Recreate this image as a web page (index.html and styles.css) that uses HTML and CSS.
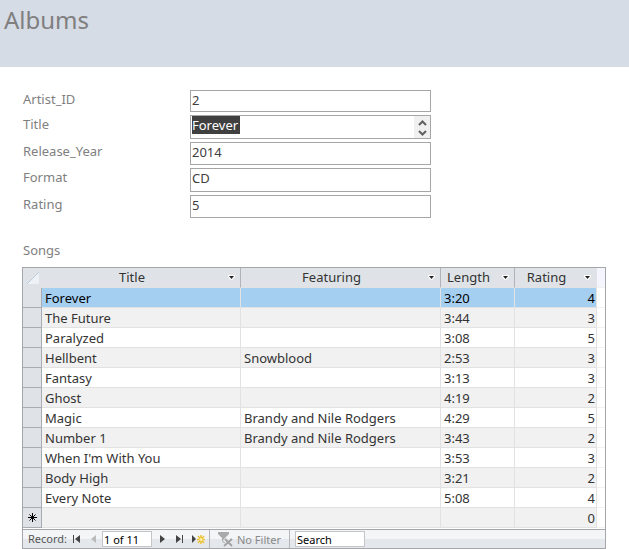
FILE: index.html
```html
<!DOCTYPE html>
<html lang="en">
<head>
<meta charset="utf-8">
<title>Albums</title>
<link rel="stylesheet" href="styles.css">
</head>
<body>
<header class="banner"><h1>Albums</h1></header>
<main class="detail">
  <form class="fields">
    <label for="artist">Artist_ID</label>
    <div class="box short"><input id="artist" value="2"></div>
    <label for="title">Title</label>
    <div class="box tall">
      <input id="title" class="selected" value="Forever">
      <div class="scroller">
        <button type="button" aria-label="Scroll up"><svg width="9" height="6" viewBox="0 0 9 6"><path d="M1 5 4.500 1.500 8 5" fill="none" stroke="#606060" stroke-width="2"/></svg></button>
        <button type="button" aria-label="Scroll down"><svg width="9" height="6" viewBox="0 0 9 6"><path d="M1 1 4.500 4.500 8 1" fill="none" stroke="#606060" stroke-width="2"/></svg></button>
      </div>
    </div>
    <label for="year">Release_Year</label>
    <div class="box"><input id="year" value="2014"></div>
    <label for="format">Format</label>
    <div class="box tall"><input id="format" value="CD"></div>
    <label for="rating">Rating</label>
    <div class="box"><input id="rating" value="5"></div>
  </form>

  <h2 id="songs">Songs</h2>
  <section class="subform" aria-labelledby="songs">
    <table>
      <colgroup><col class="c-sel"><col><col class="c-featuring"><col class="c-length"><col class="c-rating"><col class="c-rest"></colgroup>
      <thead>
        <tr>
          <th class="sel"><svg width="12" height="12" viewBox="0 0 12 12"><path d="M12 0V12H0z" fill="#eef2f7"/><path d="M0 12 12 0" stroke="#b8cde0" fill="none"/></svg></th>
          <th><div class="head"><span>Title</span><button aria-label="Title options"><svg width="7" height="5" viewBox="0 0 7 5"><path d="M0 0H7V2L4 5H3L0 2z" fill="#fff"/><path d="M1 1H6L3.500 4z" fill="#222"/></svg></button></div></th>
          <th><div class="head"><span>Featuring</span><button aria-label="Featuring options"><svg width="7" height="5" viewBox="0 0 7 5"><path d="M0 0H7V2L4 5H3L0 2z" fill="#fff"/><path d="M1 1H6L3.500 4z" fill="#222"/></svg></button></div></th>
          <th><div class="head"><span>Length</span><button aria-label="Length options"><svg width="7" height="5" viewBox="0 0 7 5"><path d="M0 0H7V2L4 5H3L0 2z" fill="#fff"/><path d="M1 1H6L3.500 4z" fill="#222"/></svg></button></div></th>
          <th class="last"><div class="head"><span>Rating</span><button aria-label="Rating options"><svg width="7" height="5" viewBox="0 0 7 5"><path d="M0 0H7V2L4 5H3L0 2z" fill="#fff"/><path d="M1 1H6L3.500 4z" fill="#222"/></svg></button></div></th>
          <td class="rest"></td>
        </tr>
      </thead>
      <tbody>
        <tr class="current"><td class="sel"></td><td>Forever</td><td></td><td>3:20</td><td class="num">4</td><td class="rest"></td></tr>
        <tr><td class="sel"></td><td>The Future</td><td></td><td>3:44</td><td class="num">3</td><td class="rest"></td></tr>
        <tr><td class="sel"></td><td>Paralyzed</td><td></td><td>3:08</td><td class="num">5</td><td class="rest"></td></tr>
        <tr><td class="sel"></td><td>Hellbent</td><td>Snowblood</td><td>2:53</td><td class="num">3</td><td class="rest"></td></tr>
        <tr><td class="sel"></td><td>Fantasy</td><td></td><td>3:13</td><td class="num">3</td><td class="rest"></td></tr>
        <tr><td class="sel"></td><td>Ghost</td><td></td><td>4:19</td><td class="num">2</td><td class="rest"></td></tr>
        <tr><td class="sel"></td><td>Magic</td><td>Brandy and Nile Rodgers</td><td>4:29</td><td class="num">5</td><td class="rest"></td></tr>
        <tr><td class="sel"></td><td>Number 1</td><td>Brandy and Nile Rodgers</td><td>3:43</td><td class="num">2</td><td class="rest"></td></tr>
        <tr><td class="sel"></td><td>When I'm With You</td><td></td><td>3:53</td><td class="num">3</td><td class="rest"></td></tr>
        <tr><td class="sel"></td><td>Body High</td><td></td><td>3:21</td><td class="num">2</td><td class="rest"></td></tr>
        <tr><td class="sel"></td><td>Every Note</td><td></td><td>5:08</td><td class="num">4</td><td class="rest"></td></tr>
        <tr><td class="sel"><svg width="9" height="9" viewBox="0 0 9 9"><path d="M4.500 0V9M0 4.500H9M1.500 1.500 7.500 7.500M7.500 1.500 1.500 7.500" stroke="#000" fill="none"/></svg></td><td></td><td></td><td></td><td class="num">0</td><td class="rest"></td></tr>
      </tbody>
    </table>
    <nav class="records" aria-label="Records">
      <label for="record">Record:</label>
      <button aria-label="First record"><svg width="7" height="8" viewBox="0 0 7 8"><path d="M0 0H1V8H0zM7 0V8L2 4z" fill="#444"/></svg></button>
      <button aria-label="Previous record" disabled><svg width="7" height="8" viewBox="0 0 7 8"><path d="M6 0V8L1 4z" fill="#bbb"/></svg></button>
      <input id="record" class="position" value="1 of 11">
      <button aria-label="Next record"><svg width="7" height="8" viewBox="0 0 7 8"><path d="M1 0V8L6 4z" fill="#444"/></svg></button>
      <button aria-label="Last record"><svg width="7" height="8" viewBox="0 0 7 8"><path d="M6 0H7V8H6zM0 0V8L5 4z" fill="#444"/></svg></button>
      <button class="new" aria-label="New record"><svg width="13" height="9" viewBox="0 0 13 9"><path d="M0 0V8L4 4z" fill="#444"/><path d="M9 0V9M5 4.500H13M6 1 12 8M12 1 6 8" stroke="#ecc23a" stroke-width="1.500" fill="none"/><circle cx="9" cy="4.500" r="1.500" fill="#fff2a0"/></svg></button>
      <button class="filter" disabled><svg width="15" height="15" viewBox="0 0 15 15"><path d="M0 0H11V2L7 6V12L4 9V6L0 2z" fill="#aaa"/><path d="M6 7 14 14M14 7 6 14" stroke="#e8ebee" stroke-width="4"/><path d="M7 7 14 14M14 7 6 14" stroke="#a2a2a2" stroke-width="2"/></svg><span>No Filter</span></button>
      <input class="search" aria-label="Search" value="Search">
    </nav>
  </section>
</main>
</body>
</html>
```
FILE: styles.css
```css
* { box-sizing: border-box; }
body { margin: 0; background: #fff; color: #333; font-size: 13px; line-height: 20px; }
body, input, button { font-family: "Noto Sans", "Open Sans", sans-serif; }
button { border: 0; padding: 0; background: none; display: flex; align-items: center; justify-content: center; }
input { border: 0; margin: 0; padding: 0; background: none; color: #404040; font-size: 13px; outline: 0; }
svg { display: block; }

.banner { background: #d6dce5; height: 67px; padding: 4px; }
h1 { margin: 0; font-size: 24px; line-height: 32px; font-weight: 400; color: #7f7f7f; }

.detail { padding: 23px 23px 0 22px; }
.fields { display: grid; grid-template-columns: 167px minmax(0, 241px); row-gap: 3px; padding-left: 1px; font-size: 13px; color: #7f7f7f; }
.fields label { line-height: 18px; }
.box { display: flex; align-items: flex-start; height: 23px; border: 1px solid #a6a6a6; padding-left: 1px; }
.box.short { height: 22px; }
.box.tall { height: 24px; }
.box input { height: 18px; width: 100%; line-height: 18px; }
.box .selected { width: 48px; background: #404040; color: #fff; }
.scroller { display: flex; flex-direction: column; justify-content: space-between; padding: 4px 0 2px; width: 16px; height: 22px; margin-left: auto; background: #f0f0f0; }

h2 { margin: 22px 0 7px; padding-left: 1px; font-size: 13px; line-height: 20px; font-weight: 400; color: #7f7f7f; }
.subform { border: 1px solid #a5a6aa; }
table { width: 100%; table-layout: fixed; border-collapse: separate; border-spacing: 0; margin-bottom: 1px; font-size: 13px; line-height: 19px; }
.c-sel { width: 19px; }
.c-featuring { width: 200px; }
.c-length { width: 74px; }
.c-rating { width: 82px; }
.c-rest { width: 8px; }
th, td { height: 20px; padding: 0 0 0 3px; border: 0 solid #e2e2e2; border-width: 0 1px 1px 0; text-align: left; font-weight: 400; white-space: nowrap; }
td { padding-top: 1px; line-height: 18px; }
th { background: #dfe3e8; padding: 0; border-right-color: #b0b3b8; }
th.last { border-right-color: #dfe3e8; }
.head { display: flex; }
.head span { flex: 1; text-align: center; }
.head button { width: 18px; }
tbody tr:nth-child(even) td { background: #f1f1f1; }
tbody tr.current td { background: #a5cff1; color: #000; }
tbody tr td.sel.sel { background: #dfe3e8; border-color: #a9adb3; padding: 0 0 0 5px; }
th.sel { border-color: #dfe3e8; padding-left: 4px; }
td.num { text-align: right; padding-right: 1px; }
tr td.rest.rest { background: #fff; border-right: 0; border-color: #f1f1f1; }
thead tr td.rest.rest { background: #f5f6fd; }

.records { display: flex; align-items: center; height: 19px; border-top: 1px solid #a5a6aa; background: linear-gradient(#f3f5f7 50%, #e4e7eb 50%); padding-left: 5px; font-size: 11px; line-height: 18px; color: #555; }
.records label { width: 40px; }
.records button { width: 17px; height: 18px; }
.records input { height: 16px; border: 1px solid #c3c5c8; background: #fff; color: #000; font-size: 11px; }
.position { width: 50px; padding-left: 1px; }
.position + button { margin-left: 2px; }
.records .new { width: 21px; }
.records .filter { width: 81px; gap: 4px; border: solid #b3b6bb; border-width: 0 1px; color: #8a8a8a; font-size: 11px; }
.search { width: 70px; margin-left: 5px; padding-left: 1px; }
```
